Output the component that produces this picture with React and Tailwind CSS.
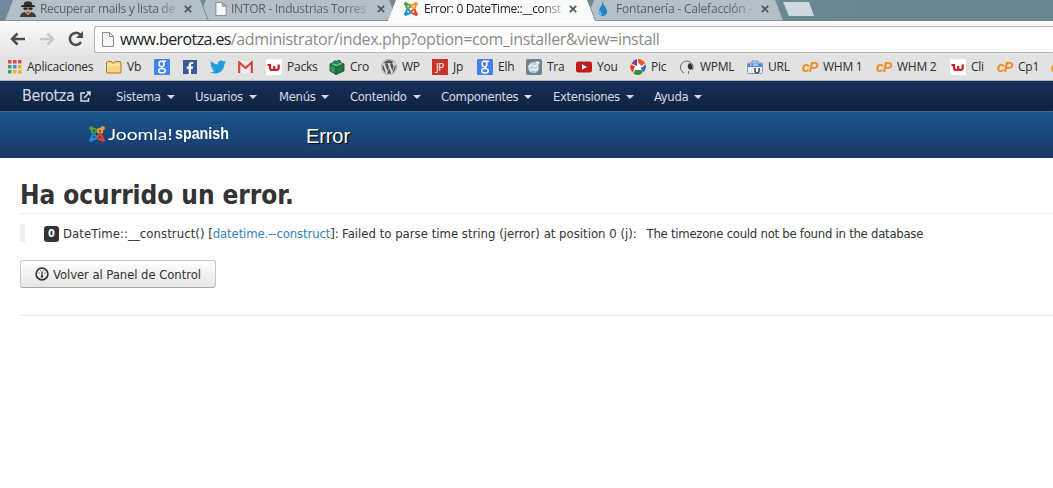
import React from "react";
import clsx from "clsx";
import { FaWordpress, FaFacebookF, FaTwitter, FaJoomla } from "react-icons/fa";

const chromeFont = "font-['Open_Sans','Noto_Sans',sans-serif]";
const pageFont = "font-['DejaVu_Sans_Condensed','DejaVu_Sans',sans-serif] [font-stretch:semi-condensed]";

// the joomla mark, one colour per quadrant
function JoomlaIcon({ className }) {
  return (
    <span className={clsx("grid shrink-0", className)}>
      <FaJoomla className="col-start-1 row-start-1 h-full w-full text-[#4f9e3a] [clip-path:polygon(0_0,50%_0,50%_50%,0_50%)]" />
      <FaJoomla className="col-start-1 row-start-1 h-full w-full text-[#f59a23] [clip-path:polygon(50%_0,100%_0,100%_50%,50%_50%)]" />
      <FaJoomla className="col-start-1 row-start-1 h-full w-full text-[#e8402f] [clip-path:polygon(50%_50%,100%_50%,100%_100%,50%_100%)]" />
      <FaJoomla className="col-start-1 row-start-1 h-full w-full text-[#1b8fd4] [clip-path:polygon(0_50%,50%_50%,50%_100%,0_100%)]" />
    </span>
  );
}

function PageIcon({ className }) {
  return (
    <svg viewBox="0 0 12 15" className={className} fill="#f8f8f8" stroke="#888">
      <path d="M.5.5h7l4 4v10H.5zM7.5.5v4h4" />
    </svg>
  );
}

function SpyIcon() {
  return (
    <svg viewBox="0 0 16 16" className="h-4 w-4 shrink-0">
      <path d="M3.500 4.500L4.500 1q3.500-1.500 7 0l1 3.500z" fill="#333" />
      <path d="M1 4.500q7-1.500 14 0v1.600H1z" fill="#222" />
      <path d="M4 6h8v4.500l-2 2.500H6l-2-2.500z" fill="#c9a58c" />
      <path d="M3.500 6.500h4v2.300h-4zM8.500 6.500h4v2.300h-4z" fill="#222" />
      <path d="M0 16q0-4 4.500-5L8 14l3.500-3Q16 12 16 16z" fill="#3f3c3a" />
      <path d="M6.500 11h3v1h-3z" fill="#7c4a3c" />
    </svg>
  );
}

function DropIcon() {
  return (
    <svg viewBox="0 0 16 16" className="h-4 w-4 shrink-0">
      <path d="M7.500 0Q8 3.500 10.500 6.500Q13 10 11.500 13Q8 17 4.500 13.500Q2.500 10.500 5 7Q7.500 3.500 7.500 0z" fill="#1c86c3" />
      <path d="M5 9.500q-1 3 2 4" stroke="#8cd0ef" fill="none" strokeWidth="1.300" />
    </svg>
  );
}

function CloseIcon({ className }) {
  return (
    <svg viewBox="0 0 8 8" className={clsx("h-2 w-2 shrink-0", className)} stroke="currentColor" strokeWidth="1.700">
      <path d="M.8.8l6.400 6.400M7.200.8L.8 7.200" />
    </svg>
  );
}

const AppsIcon = () => (
  <svg viewBox="0 0 14 14" className="h-3.5 w-3.5">
    <path d="M0 0h3.500v3.500H0zM5 0h3.500v3.500H5zM10 0h3.500v3.500H10z" fill="#df4b53" />
    <path d="M0 5h3.500v3.500H0z" fill="#3aa65c" />
    <path d="M5 5h3.500v3.500H5z" fill="#3a8de0" />
    <path d="M10 5h3.500v3.500H10z" fill="#efb01e" />
    <path d="M0 10h3.500v3.500H0z" fill="#3aa65c" />
    <path d="M5 10h3.500v3.500H5zM10 10h3.500v3.500H10z" fill="#efb01e" />
  </svg>
);

const FolderIcon = () => (
  <svg viewBox="0 0 16 14" className="h-3.5 w-4">
    <path d="M.5 12V2.500q0-1 1-1h4l1 1.500h1.500l1-1.500h5q1 0 1 1V12q0 1-1 1h-12.500q-1 0-1-1z" fill="#fad583" stroke="#a97722" />
    <path d="M1.500 5h12.500" stroke="#fff0c2" />
  </svg>
);

const GoogleIcon = () => (
  <svg viewBox="0 0 16 16" className="h-4 w-4 shrink-0">
    <rect width="16" height="16" rx="1" fill="#4581ee" />
    <g fill="none" stroke="#fff" strokeWidth="1.500">
      <ellipse cx="7.500" cy="5" rx="2.500" ry="2.700" />
      <path d="M8 2.300h4M9 7q-2 1.500 0 2.600" />
      <ellipse cx="8" cy="11.700" rx="3.300" ry="2.200" />
    </g>
  </svg>
);

const FacebookIcon = () => (
  <span className="flex h-3.5 w-3.5 items-end justify-end bg-[#3b5998] pr-px text-white">
    <FaFacebookF size={12} />
  </span>
);

const TwitterIcon = () => <FaTwitter size={16} className="text-[#219ddd]" />;

const GmailIcon = () => (
  <svg viewBox="0 0 15 12" className="h-3 w-[15px]">
    <path d="M1 0h13v12H1z" fill="#f1eeee" />
    <path d="M1.200 12V1.300L7.500 7l6.300-5.700V12" fill="none" stroke="#d4453c" strokeWidth="2.200" />
  </svg>
);

const WIcon = () => (
  <svg viewBox="0 0 16 16" className="h-4 w-4">
    <path d="M0 0h16v16H0z" fill="#fff" />
    <path d="M1.500 6h2.300M4 5v4q0 2 2.200 2 2 0 2-2V7v2q0 2 2.200 2 2.300 0 2.300-2.500V5.500" fill="none" stroke="#cb1f2c" strokeWidth="2.200" />
  </svg>
);

const BoxIcon = () => (
  <svg viewBox="0 0 16 16" className="h-4 w-4" stroke="#174d2a" strokeWidth=".8">
    <path d="M1 5l6 3v7.500L1 12z" fill="#2f9a55" />
    <path d="M7 8l8-3v7l-8 3.500z" fill="#1f7a40" />
    <path d="M1 5l7-3 7 3-8 3z" fill="#5fc37e" />
    <path d="M4 3.500q1-3 4-1 2-2.500 4 0L8 5z" fill="#38a860" />
  </svg>
);

const JpIcon = () => (
  <span className="flex h-4 w-4 items-center justify-center bg-[#c8342c] text-[10px] leading-none tracking-[-0.3px] text-white">JP</span>
);

const TraIcon = () => (
  <svg viewBox="0 0 16 16" className="h-4 w-4">
    <rect width="16" height="16" rx="2" fill="#71828f" />
    <circle cx="7.500" cy="8.500" r="5.500" fill="#b9d0df" />
    <path d="M3 8q2-3 4-1.500T12 6M4 12q2-3 4-1.500t4-1" stroke="#e9f1f5" strokeWidth="1.600" fill="none" />
    <path d="M9 2l5 1-2 3z" fill="#eef4f7" />
  </svg>
);

const YoutubeIcon = () => (
  <svg viewBox="0 0 16 12" className="h-3 w-4">
    <rect y=".5" width="16" height="11" rx="2" fill="#bd1d20" />
    <path d="M6 3.300v5.400L11 6z" fill="#fff" />
  </svg>
);

const PicasaIcon = () => (
  <svg viewBox="0 0 16 16" className="h-4 w-4">
    <circle cx="8" cy="8" r="6" fill="#fff" />
    <path d="M7 0v7L1.500 4.500Q3.500.8 7 0z" fill="#8a3b98" />
    <path d="M8 0q5 0 7 4.500L11.500 7 8 3.500z" fill="#e8582a" />
    <path d="M15.500 5.500q1.500 5-2.500 8L11 9z" fill="#2c69c0" />
    <path d="M12 14.500q-4.500 3-8.500 0L5 11h7z" fill="#38913b" />
    <path d="M2.500 13.500Q-.8 10 .8 5.500L5 7.500z" fill="#e53529" />
  </svg>
);

const WpmlIcon = () => (
  <svg viewBox="0 0 16 16" className="h-4 w-4" fill="none" stroke="#666">
    <path d="M5 14A6.300 6.300 0 1 1 13.500 11" />
    <path d="M10 4q4 1 3.500 5.500L11 11q-4-3-1-7z" fill="#333" stroke="none" />
    <path d="M9.500 12v3" strokeWidth=".9" />
  </svg>
);

const UrlIcon = () => (
  <svg viewBox="0 0 16 16" className="h-4 w-4">
    <path d="M5 4V2h6v2" fill="none" stroke="#6b94c8" />
    <rect x=".5" y="4" width="15" height="10.500" rx="1" fill="#e9eef5" stroke="#7a9fce" />
    <path d="M1 4.500h14V8H1z" fill="#5289d6" />
    <path d="M3 6h1.500M6 6h5" stroke="#fff" />
    <path d="M8 9v3q.2 2 2 2t2-2V9" fill="#fff" stroke="#444" strokeWidth="1.500" />
  </svg>
);

const CpIcon = () => (
  <span className="flex h-4 w-4 items-center font-['Liberation_Sans',sans-serif] text-[14px] leading-none font-bold tracking-[-0.9px] text-[#f08c22] italic">cP</span>
);

const bookmarks = [
  { icon: AppsIcon, label: "Aplicaciones", box: "w-[98px] gap-1.5" },
  { icon: FolderIcon, label: "Vb", box: "w-12" },
  { icon: GoogleIcon, box: "w-[29px]" },
  { icon: FacebookIcon, box: "w-[27px]" },
  { icon: TwitterIcon, box: "w-7" },
  { icon: GmailIcon, box: "w-7" },
  { icon: WIcon, label: "Packs", box: "w-[63px]" },
  { icon: BoxIcon, label: "Cro", box: "w-[52px]" },
  { icon: () => <FaWordpress size={16} className="text-[#555]" />, label: "WP", box: "w-[51px]" },
  { icon: JpIcon, label: "Jp", box: "w-[45px]" },
  { icon: GoogleIcon, label: "Elh", box: "w-[49px]" },
  { icon: TraIcon, label: "Tra", box: "w-[50px]" },
  { icon: YoutubeIcon, label: "You", box: "w-[54px]" },
  { icon: PicasaIcon, label: "Pic", box: "w-[49px]" },
  { icon: WpmlIcon, label: "WPML", box: "w-[68px]" },
  { icon: UrlIcon, label: "URL", box: "w-[55px]" },
  { icon: CpIcon, label: "WHM 1", box: "w-[74px]" },
  { icon: CpIcon, label: "WHM 2", box: "w-[74px]" },
  { icon: WIcon, label: "Cli", box: "w-[47px]" },
  { icon: CpIcon, label: "Cp1", box: "w-[54px]" },
  { icon: CpIcon, box: "w-4" },
];

const menus = [
  { label: "Sistema", box: "w-[79px]" },
  { label: "Usuarios", box: "w-[84px]" },
  { label: "Menús", box: "w-[71px]" },
  { label: "Contenido", box: "w-[91px]" },
  { label: "Componentes", box: "w-28" },
  { label: "Extensiones", box: "w-[101px]" },
  { label: "Ayuda", box: "w-[60px]" },
];

function Tab({ icon, title, active, box, inner, text }) {
  return (
    <div className={clsx("h-full shrink-0 drop-shadow-[1px_0_0_#7f8d96]", box)}>
      <div
        className={clsx(
          "flex h-full items-center pb-[3px] [clip-path:polygon(8px_0,calc(100%-8px)_0,100%_100%,0_100%)]",
          active ? "bg-[#fafbfb] text-[#222]" : "border-b border-[#84939c] bg-[#b4c0c8] text-[#56616a]",
          inner
        )}
      >
        {icon}
        <span className={clsx("ml-1 [mask-image:linear-gradient(to_right,#000_85%,#0004)] text-xs leading-4 whitespace-nowrap", text)}>{title}</span>
        <CloseIcon className="ml-auto text-[#4c565d]" />
      </div>
    </div>
  );
}

function TabStrip() {
  return (
    <div className="isolate flex h-[21px] bg-gradient-to-r from-[#70889a] via-[#6f8896] to-[#688591] pl-[5px]">
      <Tab box="relative z-10 w-[203px]" inner="pl-[15px] pr-[16px]" icon={<SpyIcon />} title="Recuperar mails y lista de" text="tracking-[-0.3px]" />
      <Tab box="w-[199px] -ml-[10px]" inner="pl-[17px] pr-[12px]" icon={<PageIcon className="h-3.5 w-3 shrink-0" />} title="INTOR - Industrias Torres" text="tracking-[-0.24px]" />
      <Tab active box="relative z-20 w-[207px] -ml-[9px]" inner="pl-[15px] pr-[18px]" icon={<JoomlaIcon className="h-4 w-4" />} title="Error: 0 DateTime::__const" text="ml-[5px] tracking-[-0.35px]" />
      <Tab box="w-[197px] -ml-[9px]" inner="pl-[9px] pr-[14px]" icon={<DropIcon />} title="Fontanería - Calefacción -" text="ml-[5px] tracking-[-0.2px]" />
      <div className="mt-0.5 h-3.5 w-[31px] bg-[#d0d9df] [clip-path:polygon(0_0,26px_0,100%_100%,6px_100%)]" />
    </div>
  );
}

function Toolbar() {
  return (
    <div className="flex h-[34px] items-center border-t border-white bg-gradient-to-b from-[#fafafa] to-[#e5e5e5] pl-2.5">
      <svg viewBox="0 0 16 14" className="h-3.5 w-4" fill="none" stroke="#4d4d4d" strokeWidth="2.500">
        <path d="M15 7H2M7.500 1.500L2 7l5.500 5.500" />
      </svg>
      <svg viewBox="0 0 16 14" className="ml-[13px] h-3.5 w-4" fill="none" stroke="#c6c6c6" strokeWidth="2.500">
        <path d="M1 7h13M8.500 1.500L14 7l-5.500 5.500" />
      </svg>
      <svg viewBox="0 0 16 16" className="ml-[13px] h-4 w-4" fill="none" stroke="#4d4d4d" strokeWidth="2.500">
        <path d="M13 11A6 6 0 1 1 12 3.500" />
        <path d="M15 0v7H8z" fill="#4d4d4d" stroke="none" />
      </svg>
      <div className="mt-0.5 ml-[10px] flex h-[27px] flex-1 items-center rounded-l-[3px] border border-r-0 border-[#b5b5b5] bg-white pl-[7px]">
        <PageIcon className="h-[15px] w-3" />
        <p className="ml-[6px] pb-px text-base leading-5 tracking-[-0.37px] whitespace-nowrap text-[#8b8b8b]">
          <span className="tracking-[-0.6px] text-[#222]">www.berotza.es</span>/administrator/index.php?option=com_installer&amp;view=install
        </p>
      </div>
    </div>
  );
}

function BookmarkBar() {
  return (
    <div className="flex h-[26px] items-center overflow-hidden border-b border-[#b4b4b4] bg-[#e2e2e2] pb-0.5 pl-2">
      {bookmarks.map(({ icon: Icon, label, box }, i) => (
        <div key={i} className={clsx("flex shrink-0 items-center gap-[5px]", box)}>
          <Icon />
          {label && <span className="text-xs leading-4 tracking-[-0.25px] whitespace-nowrap text-[#2b2b2b]">{label}</span>}
        </div>
      ))}
    </div>
  );
}

function AdminNav() {
  return (
    <nav className="flex h-[30px] items-center bg-gradient-to-b from-[#16305a] to-[#10223e] pl-[22px] text-[#d3dbe8]">
      <a className="flex w-[94px] items-center gap-1.5 text-base leading-5 tracking-[-0.4px]">
        Berotza
        <svg viewBox="0 0 11 11" className="h-[11px] w-[11px]" fill="none" stroke="currentColor" strokeWidth="1.500">
          <path d="M5 2H1v8h7.500V7M4 7l5.500-5.500M6.500 1H10v3.500" />
        </svg>
      </a>
      {menus.map((m) => (
        <a key={m.label} className={clsx("flex items-center gap-[6px] pt-0.5 text-[13px] leading-4 tracking-[-0.35px]", m.box)}>
          {m.label}
          <svg viewBox="0 0 8 4" className="h-1 w-2" fill="currentColor"><path d="M0 0h8L4 4z" /></svg>
        </a>
      ))}
    </nav>
  );
}

function AdminHeader() {
  return (
    <header className="flex h-[47px] items-center border-t border-b border-t-[#41729b] border-b-[#23386c] bg-gradient-to-b from-[#17568c] to-[#1a3867] pl-[88px] text-white">
      <div className="flex w-[218px] items-center pb-0.5">
        <JoomlaIcon className="h-[18px] w-[18px]" />
        <span className="ml-0.5 inline-block w-[67px] origin-left scale-x-[1.2] font-['Lato',sans-serif] text-[16px] leading-5 whitespace-nowrap">
          Joomla!
        </span>
        <span className="inline-block origin-left scale-x-[0.84] font-['Liberation_Sans',sans-serif] text-[17px] leading-5 font-bold">spanish</span>
      </div>
      <h1 className="pt-0.5 font-['Liberation_Sans',sans-serif] text-[20px] leading-6 tracking-[-0.1px] [text-shadow:1px_1px_1px_#000]">Error</h1>
    </header>
  );
}

export default function App() {
  return (
    <div className="h-[488px] w-[1053px] overflow-hidden bg-white">
      <div className={chromeFont}>
        <TabStrip />
        <Toolbar />
        <BookmarkBar />
      </div>
      <div className={pageFont}>
        <AdminNav />
        <AdminHeader />
        <main className="pt-[19px] pl-5 text-[13px] leading-[18px] text-[#333]">
          <h1 className="h-[37px] border-b border-[#eee] text-[26px] leading-9 font-bold tracking-[-0.07px] whitespace-nowrap">Ha ocurrido un error.</h1>
          <blockquote className="mt-2.5 flex h-[18px] items-center border-l-5 border-[#eee] pl-[19px] whitespace-nowrap">
            <span className="mt-0.5 mr-1 flex h-4 w-[15px] items-center justify-center rounded-[3px] bg-[#333] text-[11px] font-bold text-white">0</span>
            <p className="pt-0.5">
              <span className="tracking-[0.06px]">DateTime::__construct() </span>
              <span className="tracking-[-0.12px]">[<a className="text-[#3381b5]">datetime.--construct</a>]: </span>
              <span className="tracking-[0.01px]">Failed to parse time string (jerror) at position 0 (j): </span>
              <span className="ml-1.5 tracking-[-0.26px]">The timezone could not be found in the database</span>
            </p>
          </blockquote>
          <button className="mt-[18px] flex h-7 w-[196px] items-center rounded-[3px] border border-[#c5c5c5] border-b-[#a8a8a8] bg-gradient-to-b from-white to-[#e6e6e6] pl-[14px] whitespace-nowrap">
            <svg viewBox="0 0 14 14" className="mr-1 h-3.5 w-3.5 shrink-0" fill="none" stroke="#333">
              <circle cx="7" cy="7" r="5.900" strokeWidth="1.700" />
              <path d="M7 4.500V9" strokeWidth="1.300" />
              <circle cx="7" cy="9.500" r="1.200" fill="#333" stroke="none" />
              <path d="M3.500 6h1M9.500 6h1M5 3.700h.7M8.300 3.700H9" />
            </svg>
            <span className="pt-px tracking-[-0.08px]">Volver al Panel de Control</span>
          </button>
          <hr className="mt-[27px] border-[#e8e8e8]" />
        </main>
      </div>
    </div>
  );
}
